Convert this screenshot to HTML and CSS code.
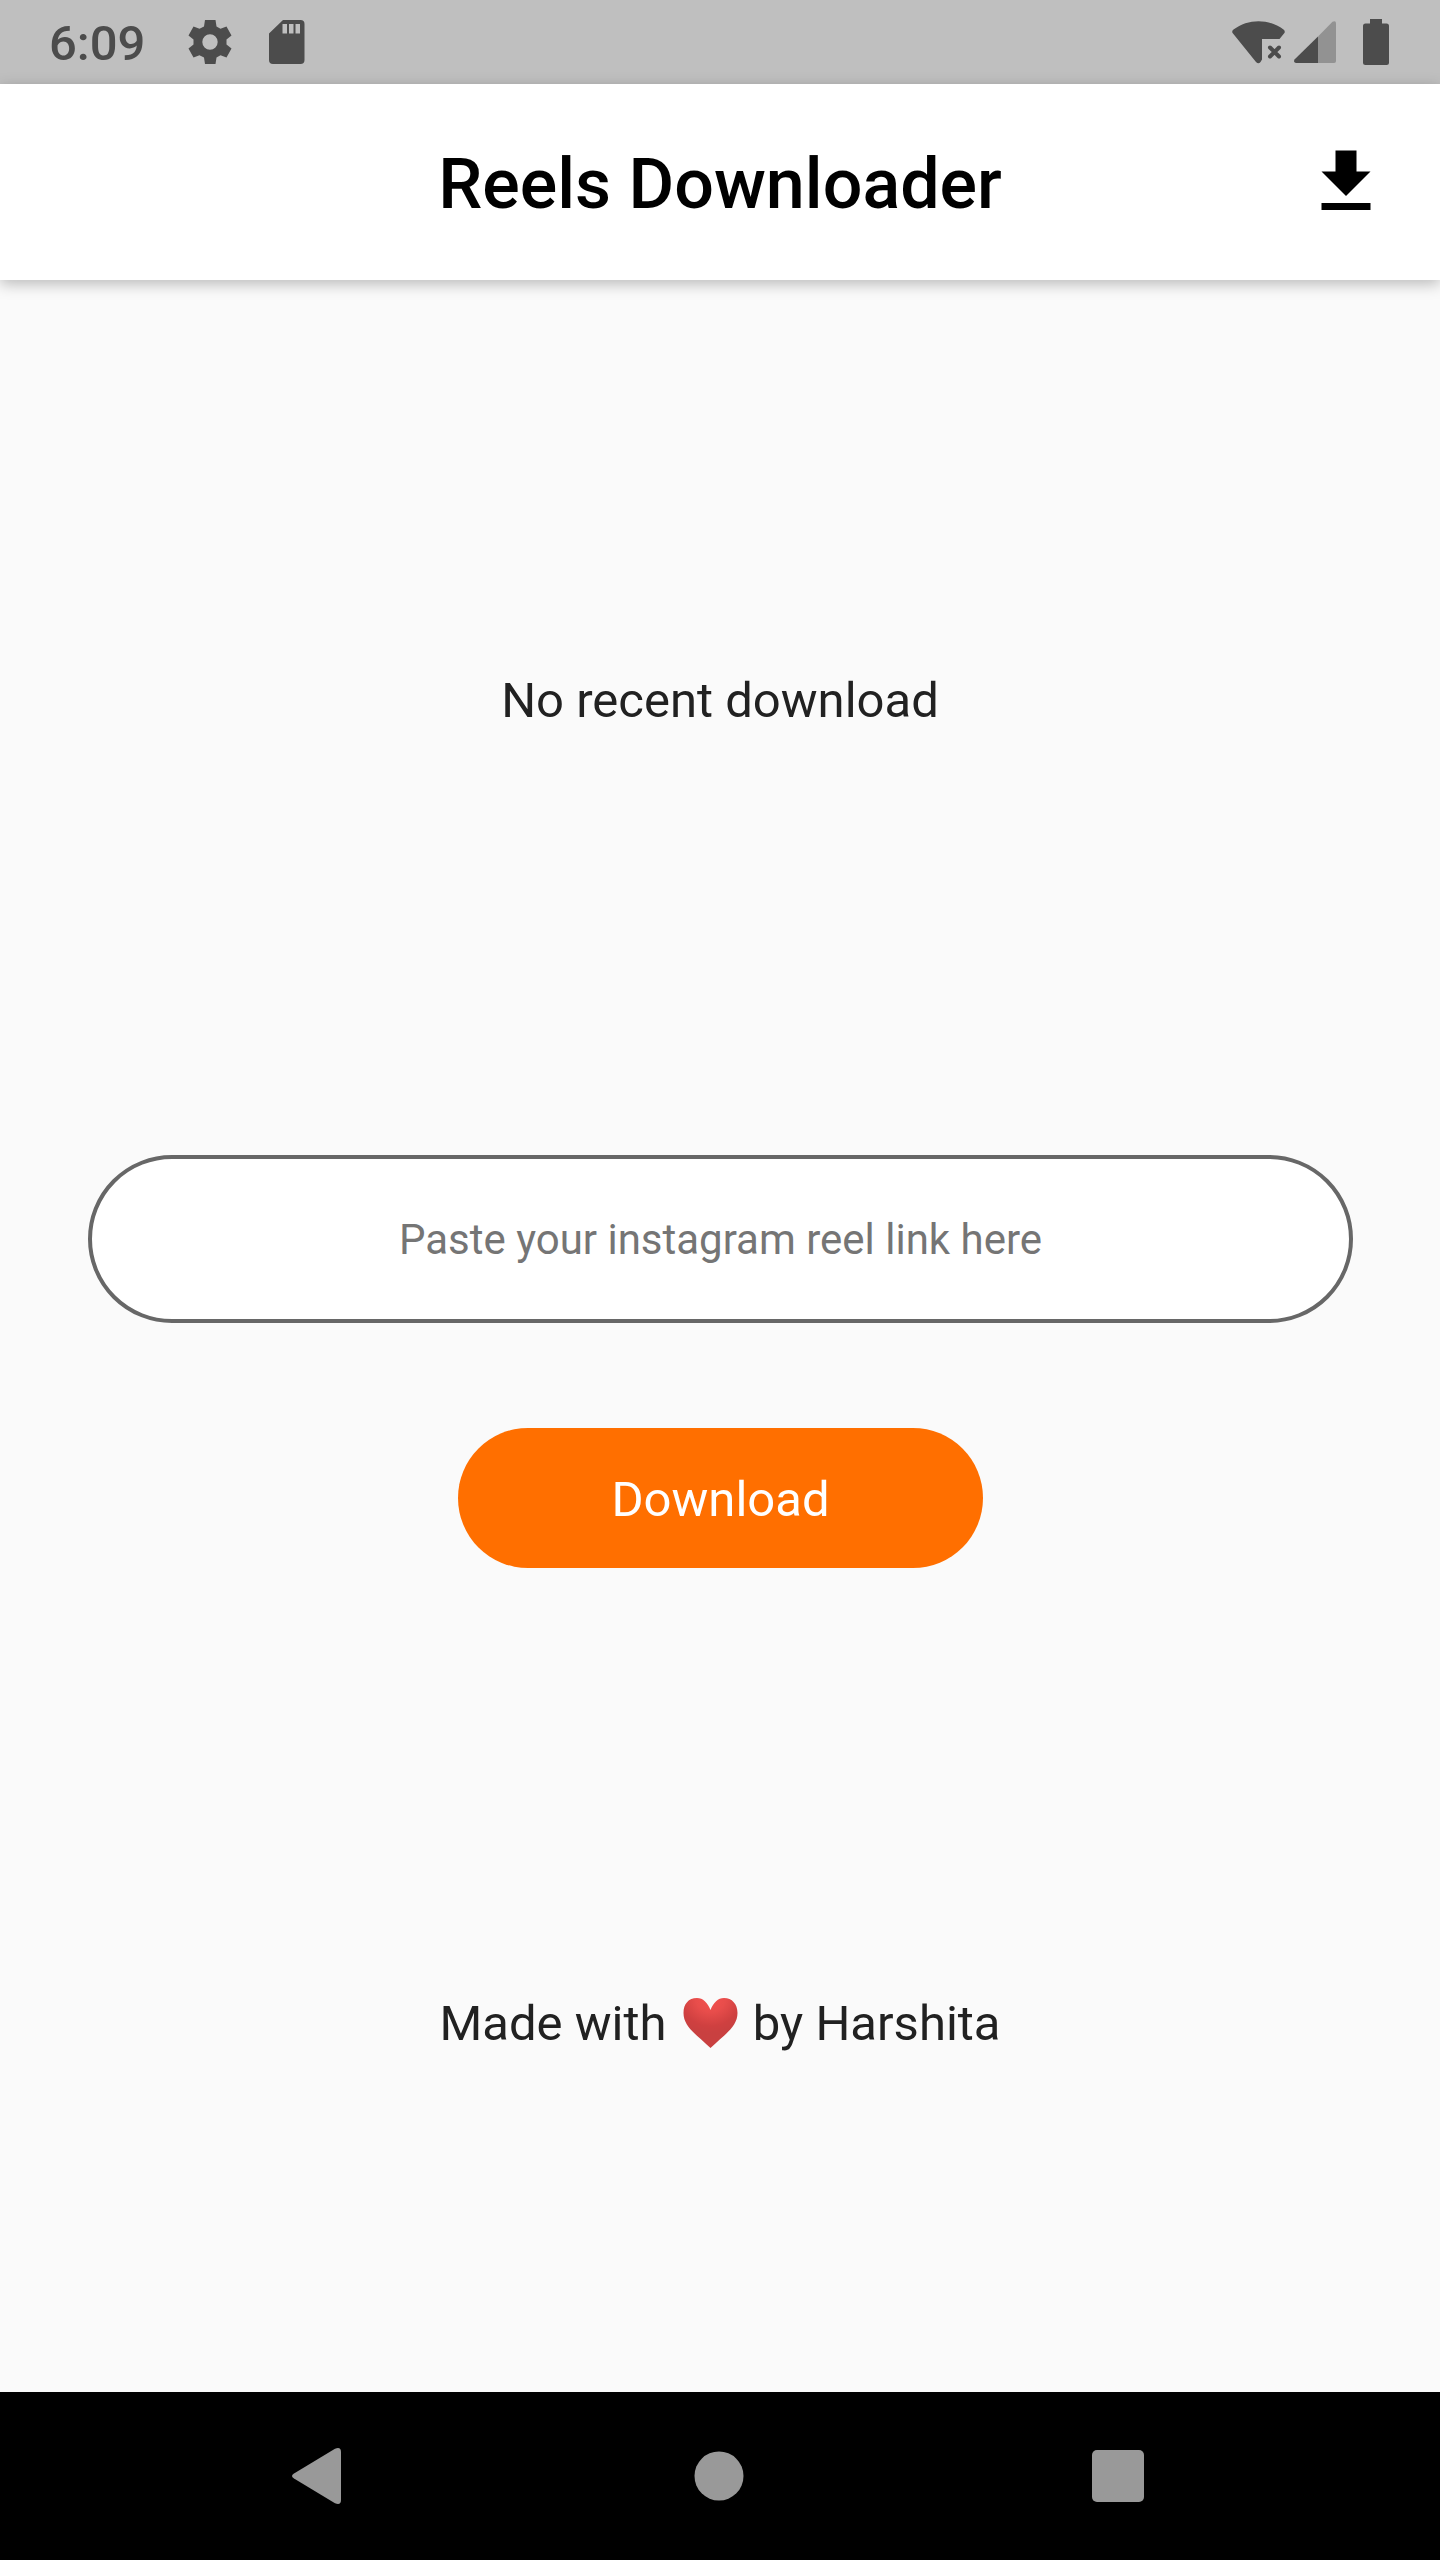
FILE: index.html
```html
<!DOCTYPE html>
<html lang="en">
<head>
<meta charset="utf-8">
<meta name="viewport" content="width=device-width, initial-scale=1">
<title>Reels Downloader</title>
<link rel="stylesheet" href="styles.css">
</head>
<body>
<div class="screen">
  <div class="status-bar">
    <div class="status-left">
      <time class="clock">6:09</time>
      <svg class="gear-icon" viewBox="0 0 44 44" aria-hidden="true"><path fill-rule="evenodd" d="M17 0H27.500L28.500 6.500L32.500 8.800L38.500 6.500L43.500 15.500L38.500 19.500V24.500L43.500 28.500L38.500 37.500L32.500 35.200L28.500 37.500L27.500 44H17L16 37.500L11.500 35.200L5.500 37.500L.5 28.500L5.500 24.500V19.500L.5 15.500L5.500 6.500L11.500 8.800L16 6.500ZM22 14.300A7.700 7.700 0 1 0 22 29.700A7.700 7.700 0 1 0 22 14.300Z"/></svg>
      <svg class="card-icon" viewBox="0 0 36 44" aria-hidden="true"><path fill-rule="evenodd" d="M14 0H31.500Q35.500 0 35.500 4V40Q35.500 44 31.500 44H4Q0 44 0 40V13.500ZM13.500 4V13.500H18V4ZM20 4V13.500H24.500V4ZM26.500 4V13.500H31V4Z"/></svg>
    </div>
    <div class="status-right">
      <svg class="wifi-icon" viewBox="0 0 54 43" aria-hidden="true"><path d="M1 12.500Q-.8 10.300 1.500 8.500C16 -2.600 37 -2.600 51.500 8.500Q53.800 10.300 52 12.500L47.500 18H30V38.500L28.500 41Q26.500 43.500 24 41Z"/><path class="cross" d="M38 26.500L47 35.500M47 26.500L38 35.500"/></svg>
      <svg class="signal-icon" viewBox="0 0 42 42" aria-hidden="true"><path class="faint" d="M24 15.500L38.500 .8Q42 -1 42 2.500V40Q42 42 40 42H24Z"/><path d="M24 15.500V42H2Q-1 41 .5 38.500Z"/></svg>
      <svg class="battery-icon" viewBox="0 0 26 46" aria-hidden="true"><path d="M7 0H19V4.500H23.500Q26 4.500 26 7V43.500Q26 46 23.500 46H2.500Q0 46 0 43.500V7Q0 4.500 2.500 4.500H7Z"/></svg>
    </div>
  </div>

  <header class="app-bar">
    <h1 class="title">Reels Downloader</h1>
    <button class="icon-button" type="button" aria-label="Downloads">
      <svg viewBox="0 0 24 24" aria-hidden="true"><path d="M19 9h-4V3H9v6H5l7 7 7-7zM5 18v2h14v-2H5z"/></svg>
    </button>
  </header>

  <main class="content">
    <section class="recent"><p>No recent download</p></section>
    <form class="link-form">
      <input class="link-input" type="text" placeholder="Paste your instagram reel link here" aria-label="Instagram reel link">
      <button class="download-button" type="button">Download</button>
    </form>
    <footer class="credit">
      <p>Made with <svg class="heart" viewBox="0 0 55 50" role="img" aria-label="love"><defs><radialGradient id="heart-fill" cx=".5" cy="0" r=".7"><stop offset="0" stop-color="#f4514f"/><stop offset=".4" stop-color="#e84d4b"/><stop offset=".8" stop-color="#cf4040"/><stop offset="1" stop-color="#c94040"/></radialGradient></defs><path fill="url(#heart-fill)" d="M27.500 12C24.500 4.500 20 0 14 0C5.500 0 .5 6 .5 15C.5 29 14 37 27.500 50C41 37 54.500 29 54.500 15C54.500 6 49 0 41 0C35 0 30.500 4.500 27.500 12Z"/></svg> by Harshita</p>
    </footer>
  </main>

  <nav class="system-nav" aria-label="System">
    <button type="button" aria-label="Back"><svg viewBox="0 0 56 56" aria-hidden="true"><path d="M2 25.500L43 .8Q49 -1.500 49 4V52Q49 57.500 43 55.200L2 30.500Q-2 28 2 25.500Z"/></svg></button>
    <button type="button" aria-label="Home"><svg viewBox="0 0 56 56" aria-hidden="true"><circle cx="28" cy="28" r="24.500"/></svg></button>
    <button type="button" aria-label="Recent apps"><svg viewBox="0 0 56 56" aria-hidden="true"><rect x="2" y="2" width="52" height="52" rx="5"/></svg></button>
  </nav>
</div>
</body>
</html>
```
FILE: styles.css
```css
* {
  box-sizing: border-box;
}

body {
  margin: 0;
  background: #fafafa;
  color: #212121;
  font-family: Roboto, "Liberation Sans", sans-serif;
  font-size: 49px;
  line-height: 58px;
}

h1,
p {
  margin: 0;
}

button,
input {
  margin: 0;
  padding: 0;
  border: 0;
  font: inherit;
}

svg {
  display: block;
  overflow: visible;
}

.screen {
  display: flex;
  flex-direction: column;
  min-height: 100vh;
}

/* Status bar */
.status-bar {
  display: flex;
  justify-content: space-between;
  align-items: center;
  height: 84px;
  padding: 0 51px 0 49px;
  background: #bfbfbf;
  color: #4c4c4c;
  fill: #4c4c4c;
}

.status-left,
.status-right {
  display: flex;
  align-items: center;
}

.clock {
  margin-right: 43px;
  padding-top: 4px;
  font-weight: 500;
}

.gear-icon {
  width: 44px;
  height: 44px;
  margin-right: 37px;
}

.card-icon {
  width: 36px;
  height: 44px;
}

.wifi-icon {
  width: 54px;
  height: 43px;
  margin-right: 8px;
}

.wifi-icon .cross {
  fill: none;
  stroke: #4c4c4c;
  stroke-width: 4;
  stroke-linecap: round;
}

.signal-icon {
  width: 42px;
  height: 42px;
  margin-right: 27px;
}

.signal-icon .faint {
  fill: #929292;
}

.battery-icon {
  width: 26px;
  height: 46px;
}

/* App bar */
.app-bar {
  position: relative;
  display: grid;
  grid-template-columns: 84px 1fr 84px;
  align-items: center;
  height: 196px;
  padding: 0 52px;
  background: #fff;
  box-shadow: 0 4px 14px rgba(0, 0, 0, 0.26);
}

.title {
  grid-column: 2;
  padding-top: 4px;
  color: #000;
  font-size: 70px;
  font-weight: 500;
  line-height: 82px;
  text-align: center;
}

.icon-button {
  background: none;
  cursor: pointer;
}

.icon-button svg {
  width: 84px;
  height: 84px;
}

/* Content */
.content {
  display: flex;
  flex: 1;
  flex-direction: column;
}

.recent,
.credit {
  display: flex;
  align-items: center;
  justify-content: center;
}

.recent {
  flex: 842 0 0;
}

.credit {
  flex: 736 0 0;
}

.link-form {
  display: flex;
  flex-direction: column;
  align-items: center;
  gap: 105px;
  padding: 33px 87px 88px 88px;
}

.link-input {
  width: 100%;
  height: 168px;
  padding: 0 56px;
  border: 4px solid #676767;
  border-radius: 84px;
  background: #fff;
  color: #212121;
  font-size: 42px;
  text-align: center;
}

.link-input::placeholder {
  color: #757575;
  opacity: 1;
}

.download-button {
  width: 525px;
  height: 140px;
  padding-top: 3px;
  border-radius: 70px;
  background: #ff6f00;
  color: #fff;
  cursor: pointer;
}

.heart {
  display: inline-block;
  width: 55px;
  height: 50px;
  margin: 0 3px 0 4px;
  vertical-align: -8px;
}

/* System navigation */
.system-nav {
  display: grid;
  grid-template-columns: repeat(3, 1fr);
  height: 168px;
  padding: 0 123px 0 121px;
  background: #000;
}

.system-nav button {
  display: flex;
  align-items: center;
  justify-content: center;
  background: none;
}

.system-nav svg {
  width: 56px;
  height: 56px;
  fill: #999;
}
```
